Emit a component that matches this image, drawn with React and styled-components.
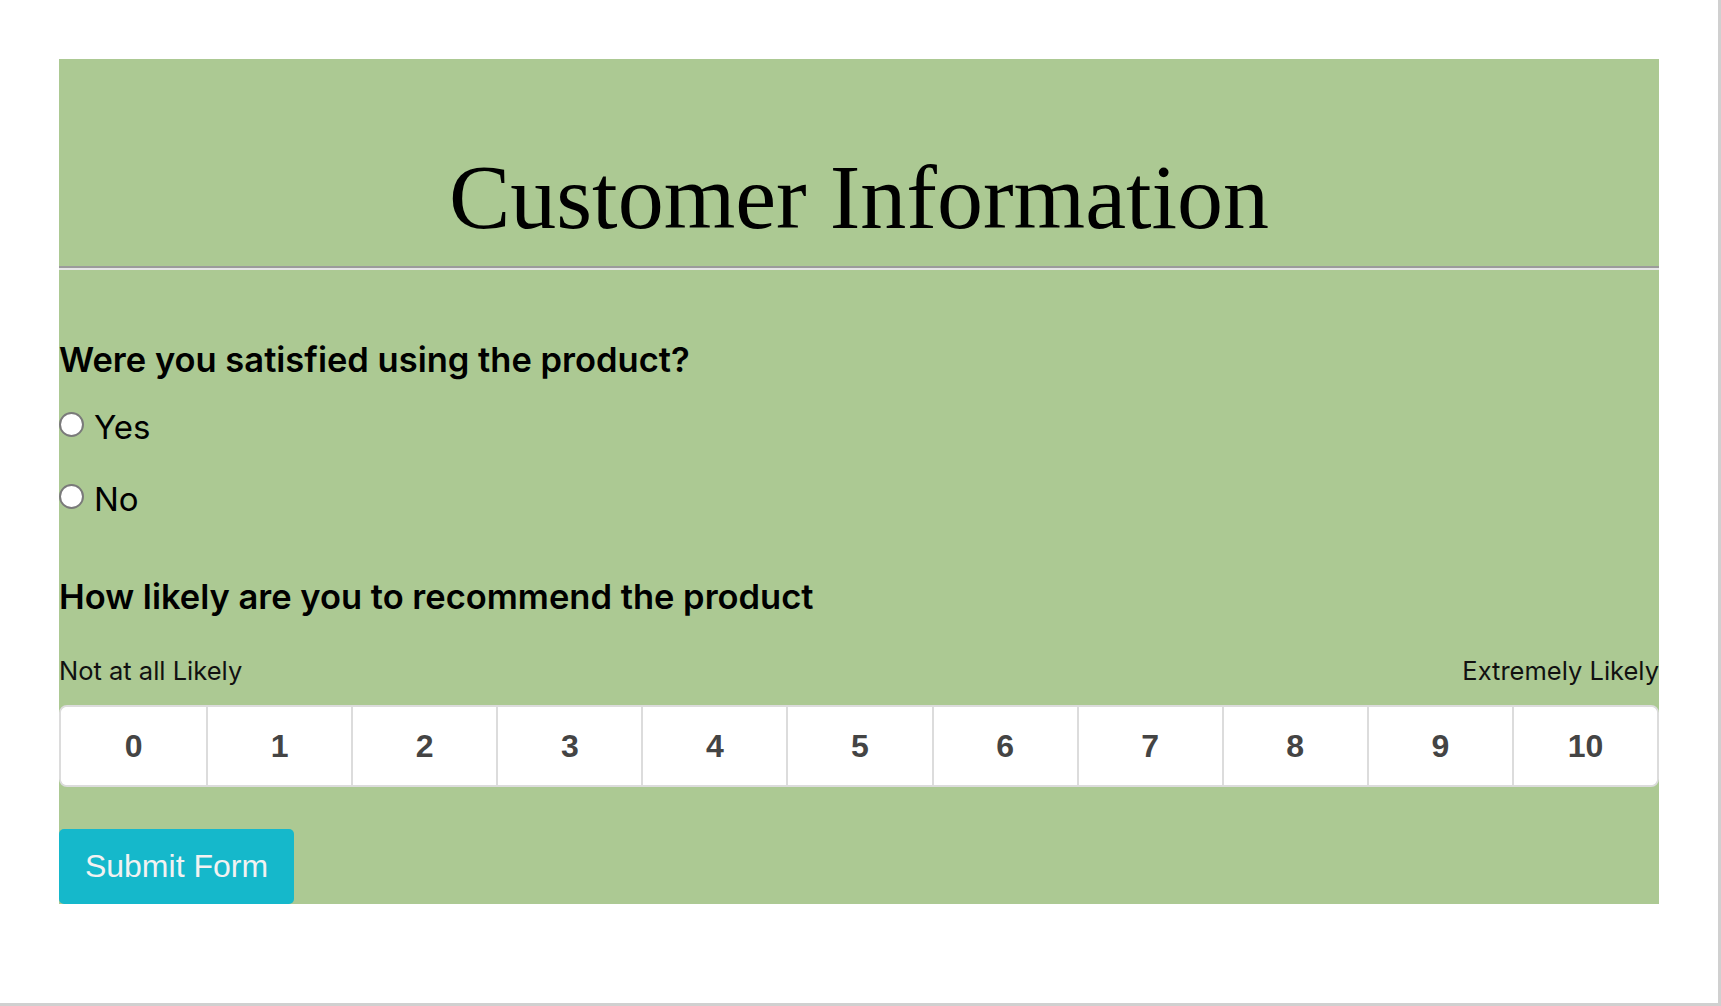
import React, { useState } from 'react';
import styled, { createGlobalStyle } from 'styled-components';

const GlobalStyle = createGlobalStyle`
    * {
        box-sizing: border-box;
    }
    body {
        margin: 0;
        background: #fff;
        font-family: Inter, "Noto Sans", sans-serif;
    }
`;

// Window frame (grey edge on the right and bottom)
const Frame = styled.div`
    width: 1721px;
    height: 1006px;
    border-right: 3px solid #d0d0d0;
    border-bottom: 3px solid #d0d0d0;
    padding-top: 59px;
    overflow: hidden;
`;

const Panel = styled.form`
    width: 1600px;
    margin: 0 auto;
    background-color: #acc993;
    display: flex;
    flex-direction: column;
`;

const Title = styled.h1`
    margin: 0;
    padding-top: 92px;
    font-family: "Liberation Serif", "Times New Roman", serif;
    font-weight: 400;
    font-size: 92px;
    line-height: 1;
    text-align: center;
    color: #000;
`;

const Rule = styled.hr`
    margin: 23px 0 0;
    border: none;
    border-top: 2px solid #9b9b9b;
    border-bottom: 2px solid #e6e6e6;
    height: 0;
`;

const Question = styled.h2`
    margin: ${props => props.top}px 0 0;
    font-size: 34.5px;
    font-weight: 600;
    line-height: 40px;
    color: #000;
`;

const Options = styled.div`
    display: flex;
    flex-direction: column;
    gap: 32px;
    margin-top: 27px;
`;

const Option = styled.label`
    display: flex;
    align-items: center;
    gap: 10px;
    font-size: 33px;
    line-height: 40px;
    color: #000;
    cursor: pointer;
`;

const Radio = styled.input.attrs({ type: 'radio' })`
    appearance: none;
    margin: 0;
    width: 25px;
    height: 25px;
    border-radius: 50%;
    border: 2px solid #7a7a7a;
    background: #fff;
    position: relative;
    top: -3px;

    &:checked {
        background: radial-gradient(circle, #1a73e8 0 5px, #fff 6px);
    }
`;

const Scale = styled.div`
    margin-top: 38px;
`;

const ScaleLabels = styled.div`
    display: flex;
    justify-content: space-between;
    font-size: 25.5px;
    line-height: 31px;
    color: #111;
`;

const ScaleRow = styled.div`
    margin-top: 19px;
    display: grid;
    grid-template-columns: repeat(11, 1fr);
    height: 82px;
    background: #fff;
    border: 2px solid #dcdcdc;
    border-radius: 8px;
    overflow: hidden;
`;

const ScaleCell = styled.button`
    border: none;
    border-left: ${props => (props.first ? 'none' : '2px solid #dcdcdc')};
    background: ${props => (props.active ? '#e8f0e0' : '#fff')};
    font-family: "Liberation Sans", Arial, sans-serif;
    font-weight: 700;
    font-size: 32px;
    color: #444;
    cursor: pointer;
    padding: 0;
`;

const SubmitButton = styled.button`
    align-self: flex-start;
    margin-top: 42px;
    width: 235px;
    height: 75px;
    border: none;
    border-radius: 5px;
    background-color: #15b8cb;
    color: #f2f2f2;
    font-family: "Liberation Sans", Arial, sans-serif;
    font-size: 32px;
    cursor: pointer;
`;

const App = () => {
    const [satisfied, setSatisfied] = useState(null);
    const [score, setScore] = useState(null);

    return (
        <>
            <GlobalStyle />
            <Frame>
                <Panel onSubmit={e => e.preventDefault()}>
                    <Title>Customer Information</Title>
                    <Rule />
                    <Question top={70}>Were you satisfied using the product?</Question>
                    <Options>
                        <Option>
                            <Radio name="satisfied" checked={satisfied === 'yes'} onChange={() => setSatisfied('yes')} />
                            Yes
                        </Option>
                        <Option>
                            <Radio name="satisfied" checked={satisfied === 'no'} onChange={() => setSatisfied('no')} />
                            No
                        </Option>
                    </Options>
                    <Question top={58}>How likely are you to recommend the product</Question>
                    <Scale>
                        <ScaleLabels>
                            <span>Not at all Likely</span>
                            <span>Extremely Likely</span>
                        </ScaleLabels>
                        <ScaleRow>
                            {Array.from({ length: 11 }, (_, i) => (
                                <ScaleCell
                                    key={i}
                                    type="button"
                                    first={i === 0}
                                    active={score === i}
                                    onClick={() => setScore(i)}
                                >
                                    {i}
                                </ScaleCell>
                            ))}
                        </ScaleRow>
                    </Scale>
                    <SubmitButton type="submit">Submit Form</SubmitButton>
                </Panel>
            </Frame>
        </>
    );
};

export default App;
